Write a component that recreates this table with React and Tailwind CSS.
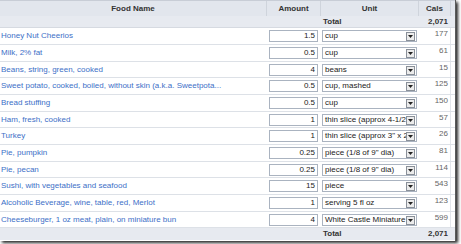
const foods = [
  { name: 'Honey Nut Cheerios', amount: '1.5', unit: 'cup', cals: '177' },
  { name: 'Milk, 2% fat', amount: '0.5', unit: 'cup', cals: '61' },
  { name: 'Beans, string, green, cooked', amount: '4', unit: 'beans', cals: '15' },
  { name: 'Sweet potato, cooked, boiled, without skin (a.k.a. Sweetpota...', amount: '0.5', unit: 'cup, mashed', cals: '125' },
  { name: 'Bread stuffing', amount: '0.5', unit: 'cup', cals: '150' },
  { name: 'Ham, fresh, cooked', amount: '1', unit: 'thin slice (approx 4-1/2', cals: '57' },
  { name: 'Turkey', amount: '1', unit: 'thin slice (approx 3" x 2', cals: '26' },
  { name: 'Pie, pumpkin', amount: '0.25', unit: 'piece (1/8 of 9" dia)', cals: '81' },
  { name: 'Pie, pecan', amount: '0.25', unit: 'piece (1/8 of 9" dia)', cals: '114' },
  { name: 'Sushi, with vegetables and seafood', amount: '15', unit: 'piece', cals: '543' },
  { name: 'Alcoholic Beverage, wine, table, red, Merlot', amount: '1', unit: 'serving 5 fl oz', cals: '123' },
  { name: 'Cheeseburger, 1 oz meat, plain, on miniature bun', amount: '4', unit: 'White Castle Miniature', cals: '599' },
];

const DropArrow = () => (
  <div className="absolute right-[1px] top-[1px] w-[9px] h-[9px] border border-[#8a9099] bg-[#ececec] flex items-center justify-center">
    <svg width="5" height="3" viewBox="0 0 5 3">
      <path d="M0 0h5L2.5 3z" fill="#222" />
    </svg>
  </div>
);

const TotalRow = ({ className }) => (
  <div className={`flex h-[12px] bg-[#e7eaf0] font-bold text-[#333] ${className}`}>
    <div className="w-[267px]" />
    <div className="w-[54px]" />
    <div className="w-[98px] pl-[2px] leading-[12px]">Total</div>
    <div className="w-[31px] text-right pr-[2px] leading-[12px]">2,071</div>
    <div className="w-[5px]" />
  </div>
);

export default function App() {
  return (
    <div className="w-[461px] h-[244px] bg-white overflow-hidden" style={{ fontFamily: '"Liberation Sans", Arial, sans-serif' }}>
      <div className="w-[456px] h-[241px] border-r border-[#5a5a5a] shadow-[2px_2px_3px_rgba(0,0,0,0.85)] text-[8px] bg-white">
        {/* header */}
        <div className="flex h-[16px] bg-[#e2e6ed] border-t border-[#c8cdd6] font-bold text-[#333] leading-[15px]">
          <div className="w-[267px] text-center border-r border-[#cfd4dc]">Food Name</div>
          <div className="w-[54px] text-center border-r border-[#cfd4dc]">Amount</div>
          <div className="w-[98px] text-center border-r border-[#cfd4dc]">Unit</div>
          <div className="w-[31px] text-center">Cals</div>
          <div className="w-[5px] border-l border-[#cfd4dc]" />
        </div>
        <TotalRow className="border-b border-[#d6dae1]" />

        {/* food rows */}
        {foods.map((f, i) => (
          <div
            key={f.name}
            className={`flex border-b border-[#dde1e7] ${i % 3 === 2 ? 'h-[16px]' : 'h-[17px]'}`}
          >
            <div className="w-[267px] pl-[1px] pt-[3px] text-[#3d6fc7] whitespace-nowrap overflow-hidden leading-[10px]">
              {f.name}
            </div>
            <div className="w-[54px] pl-[2px] pt-[2px]">
              <div className="w-[49px] h-[12px] border border-[#aab3c0] bg-white text-right pr-[2px] text-[#222] leading-[10px]">
                {f.amount}
              </div>
            </div>
            <div className="w-[98px] pl-[1px] pt-[2px]">
              <div className="relative w-[95px] h-[12px] border border-[#aab3c0] bg-white pl-[2px] text-[#222] leading-[10px]">
                <span className="block w-[82px] whitespace-nowrap">{f.unit}</span>
                <DropArrow />
              </div>
            </div>
            <div className="w-[31px] text-right pr-[2px] pt-[1px] text-[#666] leading-[10px]">{f.cals}</div>
            <div className="w-[5px] border-l border-[#e3e6eb]" />
          </div>
        ))}

        <TotalRow />
      </div>
    </div>
  );
}
